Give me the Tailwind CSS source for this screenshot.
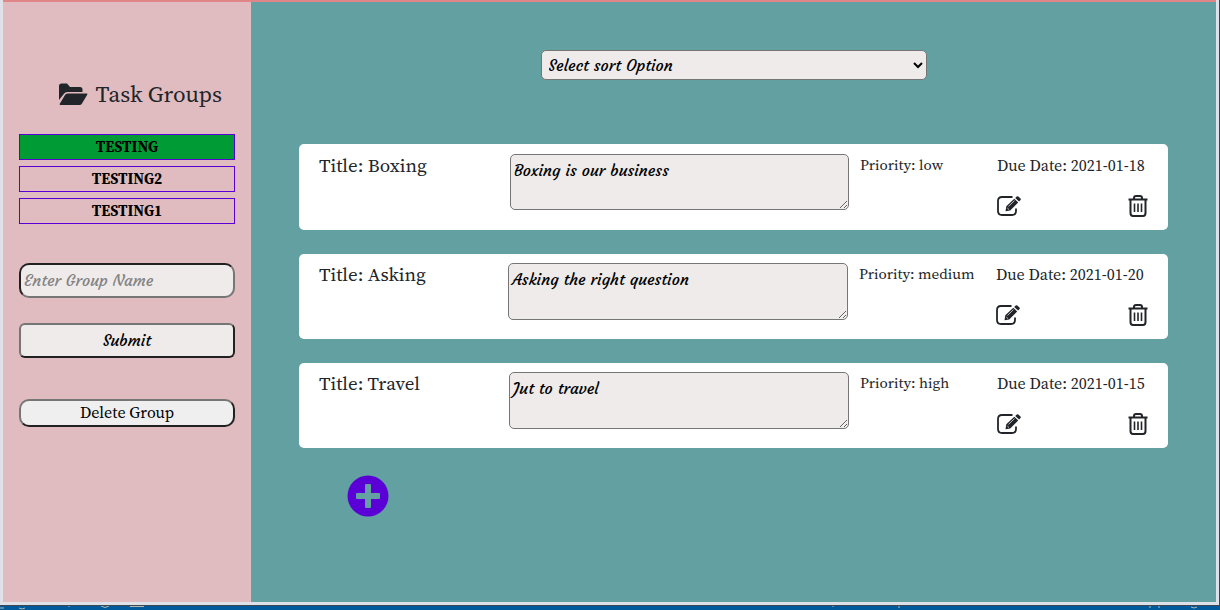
<!DOCTYPE html>
<html lang="en">
<head>
<meta charset="utf-8">
<meta name="viewport" content="width=device-width, initial-scale=1">
<title>Task Groups</title>
<script src="https://cdn.jsdelivr.net/npm/@tailwindcss/browser@4"></script>
</head>
<body class="flex min-h-screen flex-col bg-[#005a9c] font-['Source_Serif_Pro','Source_Serif_4','Noto_Serif_JP','Noto_Serif','Liberation_Serif',serif] text-[#212529]">
<svg class="hidden" aria-hidden="true">
  <symbol id="edit" viewBox="0 0 24 20"><path d="M15.500 1H5Q1 1 1 5v10q0 4 4 4h10q4 0 4-4v-2.500" fill="none" stroke="currentColor" stroke-width="1.800"/><path d="M8.500 15.300l.8-5L17.300 2.700l3.900 3.800-8 7.900zM18.200 1.900L19.700.5q.8-.7 1.600 0l2.200 2.100q.7.800 0 1.500l-1.400 1.500z" fill="currentColor"/><path d="M11.500 10.400l6-5.800M10.300 12l1.700 1.600" stroke="#fff" stroke-width=".7"/></symbol>
  <symbol id="trash" viewBox="0 0 20 22"><path d="M.5 4.500h19M6 4V3Q6 1 8 1h4q2 0 2 2v1M2.500 4.500V18q0 3 2.500 3h10q2.500 0 2.500-3V4.500" fill="none" stroke="currentColor" stroke-width="2"/><path d="M6.500 8.500V17M10 8.500V17M13.500 8.500V17" stroke="currentColor" stroke-width="1.600"/></symbol>
</svg>
<div class="flex flex-1 border-r border-b border-[#3b4854]">
<div class="flex flex-1 border-x-[3px] border-b-[3px] border-[#dfe1e8]">
<div class="flex flex-1 border-t-2 border-[#e08689]">
  <aside class="w-[248px] shrink-0 bg-[#e0bcc0] px-4 pt-[77px]">
    <h1 class="flex h-[30px] items-center justify-end gap-2 pr-[13px] text-[23px]">
      <svg class="h-6 w-[30px]" viewBox="0 0 30 24" fill="currentColor" aria-hidden="true"><path d="M1 18V4q0-2.500 2.500-2.500H9L12 5h10q2.500 0 2.500 2.500V10H9.500Q7 10 6 11.800zM2.500 23q-1.300 0-.7-1.200L7 13q.8-1.500 2.500-1.500h19q1.500 0 .7 1.300L24 21.500q-.8 1.500-2.500 1.500z"/></svg>
      Task Groups
    </h1>
    <div class="mt-[25px] flex flex-col gap-[6px] text-[15px] font-bold text-black">
      <button class="h-[26px] border border-[#5a00d6] bg-[#009b35] leading-[22px]">TESTING</button>
      <button class="h-[26px] border border-[#5a00d6] leading-[22px]">TESTING2</button>
      <button class="h-[26px] border border-[#5a00d6] leading-[22px]">TESTING1</button>
    </div>
    <form class="mt-[39px] font-['Courgette','Lato',sans-serif] text-base font-semibold text-black">
      <input aria-label="Group name" placeholder="Enter Group Name" class="block h-[35px] w-full rounded-[10px] border-2 border-t-[#212121] border-r-[#767676] border-b-[#767676] border-l-[#212121] bg-[#efebea] px-[3px] pb-[2px] placeholder:text-[#858383]">
      <button type="button" class="mt-[25px] block h-[35px] w-full rounded-md border-2 border-t-[#767676] border-r-[#212121] border-b-[#212121] border-l-[#767676] bg-[#efebea] pb-[2px]">Submit</button>
    </form>
    <button class="mt-[41px] flex h-7 w-full items-center justify-center rounded-[10px] border-2 border-t-[#767676] border-r-[#212121] border-b-[#212121] border-l-[#767676] bg-[#efefef] pb-[2px] text-base text-black">Delete Group</button>
  </aside>
  <main class="flex-1 bg-[#62a0a1] px-12 pt-12">
    <select aria-label="Sort option" class="mx-auto block h-[30px] w-[386px] max-w-full rounded-[5px] border border-[#767676] bg-[#efebea] px-[3px] font-['Courgette','Lato',sans-serif] text-base font-semibold text-black"><option>Select sort Option</option></select>
    <div class="mt-16 flex flex-col gap-6">
      <article class="flex h-[86px] rounded-[5px] bg-white px-5 pt-[10px]">
        <h2 class="flex-1 text-[19px] leading-[22px]">Title: Boxing</h2>
        <textarea aria-label="Description" class="h-14 w-[339px] rounded-[5px] border border-[#767676] bg-[#efebea] px-[3px] py-[3px] font-['Courgette','Lato',sans-serif] text-base font-semibold text-black">Boxing is our business</textarea>
        <p class="w-[148px] pl-[11px] text-[15px] leading-[22px]">Priority: low</p>
        <div class="flex w-[151px] flex-col text-base leading-[22px]"><p class="whitespace-nowrap">Due Date: 2021-01-18</p><div class="mt-[19px] flex justify-between"><button aria-label="Edit"><svg class="h-5 w-6"><use href="#edit"/></svg></button><button aria-label="Delete"><svg class="h-[22px] w-5"><use href="#trash"/></svg></button></div></div>
      </article>
      <article class="flex h-[85px] rounded-[5px] bg-white px-5 pt-[9px]">
        <h2 class="flex-1 text-[19px] leading-[22px]">Title: Asking</h2>
        <textarea aria-label="Description" class="h-[57px] w-[340px] rounded-[5px] border border-[#767676] bg-[#efebea] px-[3px] py-[3px] font-['Courgette','Lato',sans-serif] text-base font-semibold text-black">Asking the right question</textarea>
        <p class="w-[148px] pl-[11px] text-[15px] leading-[22px]">Priority: medium</p>
        <div class="flex w-[152px] flex-col text-base leading-[22px]"><p class="whitespace-nowrap">Due Date: 2021-01-20</p><div class="mt-[19px] flex justify-between"><button aria-label="Edit"><svg class="h-5 w-6"><use href="#edit"/></svg></button><button aria-label="Delete"><svg class="h-[22px] w-5"><use href="#trash"/></svg></button></div></div>
      </article>
      <article class="flex h-[85px] rounded-[5px] bg-white px-5 pt-[9px]">
        <h2 class="flex-1 text-[19px] leading-[22px]">Title: Travel</h2>
        <textarea aria-label="Description" class="h-[57px] w-[340px] rounded-[5px] border border-[#767676] bg-[#efebea] px-[3px] py-[3px] font-['Courgette','Lato',sans-serif] text-base font-semibold text-black">Jut to travel</textarea>
        <p class="w-[148px] pl-[11px] text-[15px] leading-[22px]">Priority: high</p>
        <div class="flex w-[151px] flex-col text-base leading-[22px]"><p class="whitespace-nowrap">Due Date: 2021-01-15</p><div class="mt-[19px] flex justify-between"><button aria-label="Edit"><svg class="h-5 w-6"><use href="#edit"/></svg></button><button aria-label="Delete"><svg class="h-[22px] w-5"><use href="#trash"/></svg></button></div></div>
      </article>
    </div>
    <button aria-label="Add task" class="mt-[27px] ml-12 block"><svg class="size-[42px]" viewBox="0 0 42 42"><circle cx="21" cy="21" r="20.500" fill="#5a00d6"/><path d="M19 9h4q1 0 1 1v8h8q1 0 1 1v4q0 1-1 1h-8v8q0 1-1 1h-4q-1 0-1-1v-8h-8q-1 0-1-1v-4q0-1 1-1h8v-8q0-1 1-1z" fill="#62a0a1"/></svg></button>
  </main>
</div>
</div>
</div>
<footer class="flex h-1 justify-between overflow-hidden" aria-hidden="true">
  <svg class="h-1 w-40" viewBox="0 0 160 4" fill="none" stroke="#b9b7ac"><path d="M0 2h4M19 2q3 2 6 0M69 0v1M101 0q4 3 8 0M130 .5h14"/></svg>
  <svg class="h-1 w-[400px]" viewBox="0 0 400 4" fill="none" stroke="#b9b7ac"><path d="M13 0v1M79 0v2M330 0v2M339 0v2M371 1q3 2 6 0"/></svg>
</footer>
</body>
</html>
